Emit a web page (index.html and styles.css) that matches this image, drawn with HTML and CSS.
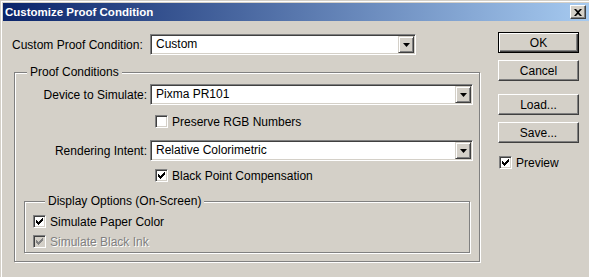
FILE: index.html
```html
<!DOCTYPE html>
<html>
<head>
  <title>Customize Proof Condition</title>
  <link rel="stylesheet" href="styles.css">
</head>
<body>
  <div class="window">
    <div class="titlebar">
      <span class="title">Customize Proof Condition</span>
      <span class="close-btn">
        <svg width="8" height="7" viewBox="0 0 8 7"><path d="M0 0h2l2 2 2-2h2L5 3.5 8 7H6L4 5 2 7H0l3-3.5z" fill="#000"/></svg>
      </span>
    </div>

    <div class="content">
      <div class="main-col">
        <div class="top-row">
          <label class="top-label">Custom Proof Condition:</label>
          <div class="combo combo-custom">
            <span class="combo-text">Custom</span>
            <span class="combo-arrow"><svg width="7" height="4" viewBox="0 0 7 4"><path d="M0 0h7L3.5 4z" fill="#000"/></svg></span>
          </div>
        </div>

        <div class="group proof-group">
          <div class="group-title">Proof Conditions</div>

          <div class="form-row first-row">
            <label class="field-label">Device to Simulate:</label>
            <div class="combo">
              <span class="combo-text">Pixma PR101</span>
              <span class="combo-arrow"><svg width="7" height="4" viewBox="0 0 7 4"><path d="M0 0h7L3.5 4z" fill="#000"/></svg></span>
            </div>
          </div>
          <div class="check-row indent gap-10">
            <span class="checkbox"></span>
            <span>Preserve RGB Numbers</span>
          </div>

          <div class="form-row gap-12">
            <label class="field-label">Rendering Intent:</label>
            <div class="combo">
              <span class="combo-text">Relative Colorimetric</span>
              <span class="combo-arrow"><svg width="7" height="4" viewBox="0 0 7 4"><path d="M0 0h7L3.5 4z" fill="#000"/></svg></span>
            </div>
          </div>
          <div class="check-row indent gap-8">
            <span class="checkbox"><svg width="7" height="7" viewBox="0 0 7 7"><path d="M0 2h1v1h1v1h1V3h1V2h1V1h1V0h1v3H6v1H5v1H4v1H3v1H2V6H1V5H0z" fill="#000"/></svg></span>
            <span>Black Point Compensation</span>
          </div>

          <div class="group display-group">
            <div class="group-title">Display Options (On-Screen)</div>
            <div class="check-row gap-7">
              <span class="checkbox"><svg width="7" height="7" viewBox="0 0 7 7"><path d="M0 2h1v1h1v1h1V3h1V2h1V1h1V0h1v3H6v1H5v1H4v1H3v1H2V6H1V5H0z" fill="#000"/></svg></span>
              <span>Simulate Paper Color</span>
            </div>
            <div class="check-row gap-7 disabled">
              <span class="checkbox"><svg width="7" height="7" viewBox="0 0 7 7"><path d="M0 2h1v1h1v1h1V3h1V2h1V1h1V0h1v3H6v1H5v1H4v1H3v1H2V6H1V5H0z" fill="#808080"/></svg></span>
              <span>Simulate Black Ink</span>
            </div>
          </div>
        </div>
      </div>

      <div class="side-col">
        <button class="btn btn-default">OK</button>
        <button class="btn gap-7">Cancel</button>
        <button class="btn gap-13">Load...</button>
        <button class="btn gap-7">Save...</button>
        <div class="check-row preview-row">
          <span class="checkbox"><svg width="7" height="7" viewBox="0 0 7 7"><path d="M0 2h1v1h1v1h1V3h1V2h1V1h1V0h1v3H6v1H5v1H4v1H3v1H2V6H1V5H0z" fill="#000"/></svg></span>
          <span>Preview</span>
        </div>
      </div>
    </div>
  </div>
</body>
</html>
```

FILE: styles.css
```css
/* Classic dialog (right and bottom frame cropped off) */
body {
  margin: 0;
  font-family: "Liberation Sans", Arial, sans-serif;
  font-size: 12px;
  color: #000;
  background-color: #d4d0c8;
}
.window {
  width: 589px;
  height: 277px;
  box-sizing: border-box;
  padding: 2px 0 0 2px;
  background-color: #d4d0c8;
  border-top: 1px solid #d4d0c8;
  border-left: 1px solid #d4d0c8;
  box-shadow: inset 1px 1px 0 #fff;
}
.titlebar {
  height: 18px;
  display: flex;
  align-items: center;
  justify-content: space-between;
  background: linear-gradient(to right, #0a246a, #a6caf0);
}
.title {
  padding-left: 2px;
  color: #fff;
  font-weight: bold;
  font-size: 11.5px;
}
.close-btn {
  width: 16px;
  height: 14px;
  margin-right: 3px;
  box-sizing: border-box;
  display: flex;
  align-items: center;
  justify-content: center;
  background-color: #d4d0c8;
  border: 1px solid;
  border-color: #fff #404040 #404040 #fff;
  box-shadow: inset -1px -1px 0 #808080;
}
.content {
  display: flex;
  padding-left: 9px;
}
.main-col {
  width: 470px;
  padding-top: 13px;
}
.side-col {
  width: 81px;
  margin-left: 16px;
  padding-top: 11px;
  display: flex;
  flex-direction: column;
}

/* rows */
.top-row,
.form-row {
  display: flex;
  align-items: center;
}
.top-label {
  width: 138px;
}
.field-label {
  width: 132px;
  margin-right: 3px;
  text-align: right;
}
.first-row {
  margin-top: 5px;
}
.gap-7 { margin-top: 7px; }
.gap-8 { margin-top: 8px; }
.gap-10 { margin-top: 10px; }
.gap-12 { margin-top: 12px; }
.gap-13 { margin-top: 13px; }

/* combo box */
.combo {
  height: 21px;
  box-sizing: border-box;
  padding: 1px;
  display: flex;
  background-color: #fff;
  border: 1px solid;
  border-color: #808080 #fff #fff #808080;
  box-shadow: inset 1px 1px 0 #404040, inset -1px -1px 0 #d4d0c8;
  flex: 1;
}
.combo-custom {
  flex: none;
  width: 266px;
}
.combo-text {
  flex: 1;
  padding-left: 4px;
  line-height: 17px;
}
.combo-arrow {
  width: 16px;
  height: 17px;
  box-sizing: border-box;
  display: flex;
  align-items: center;
  justify-content: center;
  background-color: #d4d0c8;
  border: 1px solid;
  border-color: #d4d0c8 #404040 #404040 #d4d0c8;
  box-shadow: inset 1px 1px 0 #fff, inset -1px -1px 0 #808080;
}

/* group boxes */
.group {
  box-sizing: border-box;
  border: 1px solid #808080;
  box-shadow: 1px 1px 0 #fff, inset 1px 1px 0 #fff;
}
.group-title {
  width: fit-content;
  height: 14px;
  line-height: 14px;
  margin-top: -8px;
  margin-left: 12px;
  padding: 0 3px;
  background-color: #d4d0c8;
}
.proof-group {
  width: 466px;
  height: 190px;
  margin-top: 17px;
  margin-left: 2px;
  padding-right: 6px;
}
.display-group {
  height: 52px;
  margin: 19px 3px 0 9px;
  padding-left: 8px;
}

/* checkboxes */
.check-row {
  height: 13px;
  display: flex;
  align-items: center;
  gap: 4px;
}
.indent {
  padding-left: 140px;
}
.checkbox {
  width: 13px;
  height: 13px;
  box-sizing: border-box;
  display: flex;
  align-items: center;
  justify-content: center;
  background-color: #fff;
  border: 1px solid;
  border-color: #808080 #fff #fff #808080;
  box-shadow: inset 1px 1px 0 #404040, inset -1px -1px 0 #d4d0c8;
}
.disabled {
  color: #808080;
  text-shadow: 1px 1px 0 #fff;
}
.disabled .checkbox {
  background-color: #d4d0c8;
}
.preview-row {
  margin-top: 13px;
  padding-left: 1px;
}

/* buttons */
.btn {
  height: 21px;
  width: 81px;
  padding: 0;
  font-family: inherit;
  font-size: 12px;
  color: #000;
  background-color: #d4d0c8;
  border: 1px solid;
  border-color: #fff #404040 #404040 #fff;
  box-shadow: inset -1px -1px 0 #808080, inset 1px 1px 0 #d4d0c8;
}
.btn-default {
  border-color: #000;
  box-shadow: inset 1px 1px 0 #fff, inset -1px -1px 0 #404040, inset -2px -2px 0 #808080;
}
```
